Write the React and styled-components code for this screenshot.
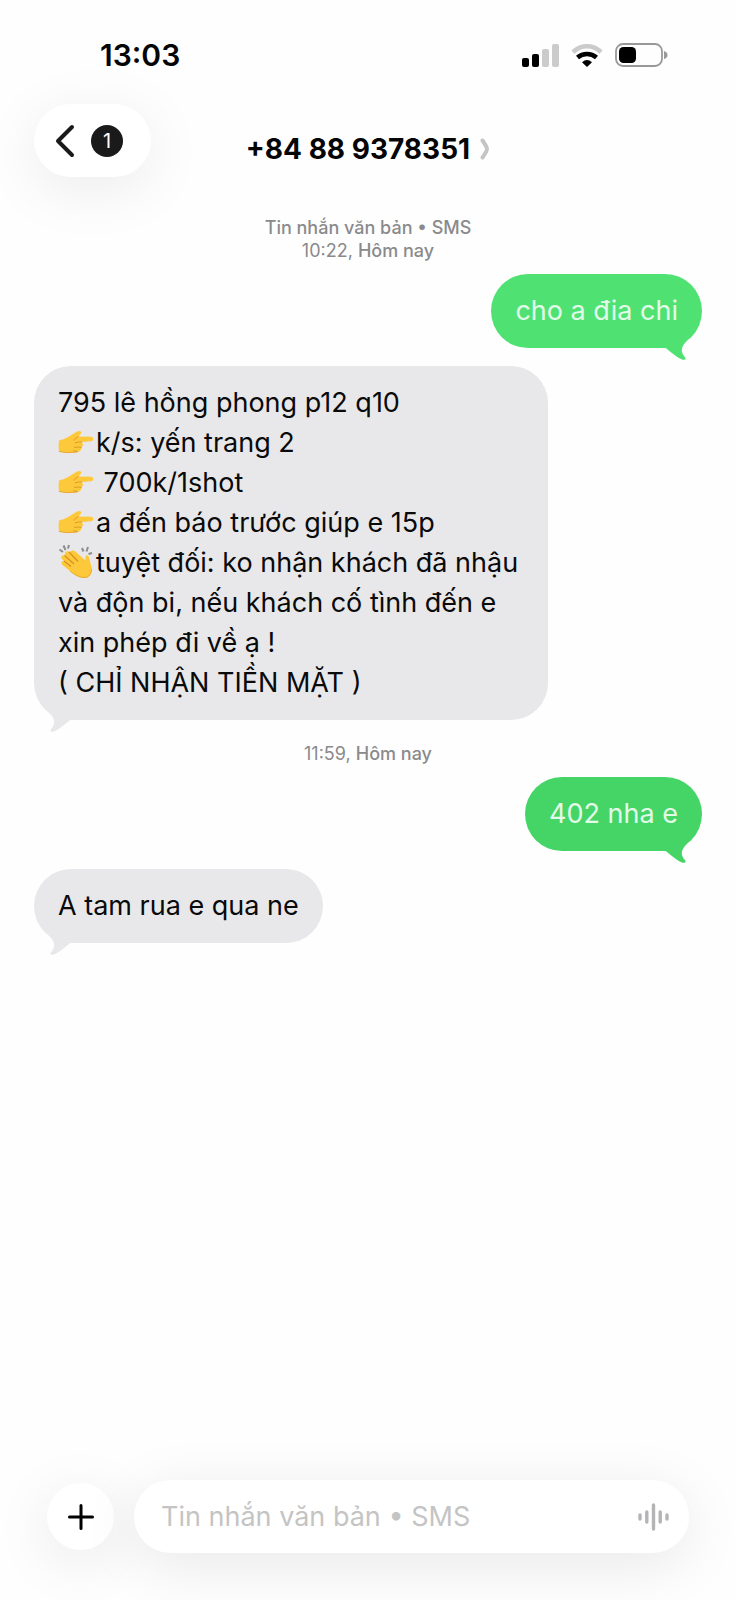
import * as React from "react";
import styled, { createGlobalStyle } from "styled-components";

const GlobalStyle = createGlobalStyle`
  * {
    box-sizing: border-box;
  }
  body {
    margin: 0;
    background: #fefefe;
    color: #050505;
    font-family: Inter, "Noto Sans", sans-serif;
  }
  button,
  input {
    font: inherit;
    border: 0;
  }
`;

const Screen = styled.div`
  display: flex;
  flex-direction: column;
  min-height: 100vh;
`;
const StatusBar = styled.div`
  display: flex;
  align-items: center;
  justify-content: space-between;
  padding: 36px 68px 0 100px;
`;
const Clock = styled.time`
  font-size: 30px;
  font-weight: 600;
  line-height: 38px;
`;
const StatusIcons = styled.div`
  display: flex;
  align-items: center;
  gap: 12px;
`;
const Header = styled.header`
  display: grid;
  grid-template-columns: 1fr auto 1fr;
  padding: 30px 34px 0;
`;
const BackButton = styled.button`
  display: flex;
  align-items: center;
  justify-self: start;
  gap: 16px;
  height: 73px;
  padding: 0 28px 0 21px;
  border-radius: 37px;
  background: #fff;
  color: #1a1a1a;
  box-shadow: 0 12px 60px rgba(0, 0, 0, 0.08);
`;
const Badge = styled.span`
  width: 32px;
  border-radius: 50%;
  background: #1a1a1a;
  color: #fff;
  font-size: 20px;
  line-height: 32px;
  text-align: center;
`;
const Contact = styled.a`
  display: flex;
  align-items: center;
  gap: 10px;
  padding-top: 16px;
  color: #050505;
  text-decoration: none;
`;
const Title = styled.h1`
  margin: 0;
  font-size: 28px;
  font-weight: 700;
  line-height: 36px;
`;
const Thread = styled.main`
  display: flex;
  flex: 1;
  flex-direction: column;
  padding: 35px 34px 0;
`;
const Meta = styled.div`
  padding: 4px 0 12px;
  color: #8a8a8c;
  font-size: 18px;
  line-height: 23px;
  text-align: center;
`;
const Label = styled.span`
  font-weight: 500;
`;
const Bubble = styled.div`
  position: relative;
  align-self: ${props => (props.$sent ? "flex-end" : "flex-start")};
  max-width: 77%;
  margin-bottom: 18px;
  padding: 17px 24px;
  border-radius: 37px;
  background: ${props => props.$tone};
  color: ${props => (props.$sent ? "#e2fbe8" : "#0a0a0a")};
  font-size: 27px;
  line-height: 40px;
`;
const Tail = styled.svg`
  position: absolute;
  bottom: -12px;
  ${props => (props.$sent ? "right: 13px" : "left: 13px; transform: scaleX(-1)")};
`;
const Line = styled.div``;
const Emoji = styled.svg`
  display: inline-block;
  margin-right: 2px;
  vertical-align: ${props => props.$drop};
`;
const Composer = styled.form`
  display: flex;
  align-items: center;
  gap: 20px;
  padding: 0 47px 47px;
`;
const AddButton = styled.button`
  display: grid;
  place-items: center;
  width: 67px;
  height: 67px;
  padding: 0;
  border-radius: 50%;
  background: #fff;
  box-shadow: 0 12px 60px rgba(0, 0, 0, 0.09);
`;
const Field = styled.div`
  display: flex;
  flex: 1;
  align-items: center;
  height: 73px;
  padding: 0 20px 0 27px;
  border-radius: 37px;
  background: #fff;
  box-shadow: 0 12px 60px rgba(0, 0, 0, 0.09);
`;
const TextInput = styled.input`
  flex: 1;
  min-width: 0;
  padding: 0;
  outline: none;
  background: transparent;
  font-size: 27px;
  line-height: 40px;
  &::placeholder {
    color: #c4c4c4;
    opacity: 1;
  }
`;
const VoiceButton = styled.button`
  display: flex;
  padding: 0;
  background: transparent;
`;

const Signal = () => (
  <svg width="37" height="23" viewBox="0 0 37 23" aria-hidden="true">
    <rect x="0" y="14" width="7" height="9" rx="2" />
    <rect x="10" y="10" width="7" height="13" rx="2" />
    <rect x="20" y="5" width="7" height="18" rx="2" fill="#cbcbcb" />
    <rect x="30" y="0" width="7" height="23" rx="2" fill="#cbcbcb" />
  </svg>
);

const Wifi = () => (
  <svg width="32" height="23" viewBox="0 0 32 23" fill="none" aria-hidden="true">
    <path d="M2 8.2C10 .3 22 .3 30 8.2" stroke="#cbcbcb" strokeWidth="4.6" />
    <path d="M6.500 13.500C12 8.800 20 8.800 25.500 13.500" stroke="#000" strokeWidth="4.600" />
    <path d="M16 23 11 18.200Q16 13.800 21 18.200Z" fill="#000" />
  </svg>
);

const Battery = () => (
  <svg width="53" height="24" viewBox="0 0 53 24" aria-hidden="true">
    <rect x="1" y="1" width="46" height="22" rx="7" fill="none" stroke="#999" strokeWidth="1.8" />
    <rect x="4" y="4" width="17" height="16" rx="4.5" />
    <path d="M49 8Q52.500 9 52.500 12T49 16Z" fill="#999" />
  </svg>
);

const Pointing = () => (
  <Emoji $drop="-2px" width="36" height="24" viewBox="0 0 36 24" role="img" aria-label="👉">
    <path
      d="M1 10.500C4 9.500 8 8.500 11 6.500 14 4.500 17 2.500 20 1.200 22.500 .5 24 2 22.800 3.800L20.500 6.500 33 6.800C36 7 36 11 33 11.300L24 12C25.500 14 25 16.500 23.500 17.500 23.500 20 22 21.500 20 21.800 17 23.200 8 23.200 1 21.500 .5 18 .5 14 1 10.500Z"
      fill="#fdc83a"
    />
    <path
      d="M17 13Q20 11.500 24 12M16 17.500Q20 16.500 23.500 17.500M15 21Q18 20.500 20 21.800M20.500 6.500Q17 8 16 10.500"
      fill="none"
      stroke="#e09a28"
    />
    <path d="M1 21.500Q9 23.500 19 22" fill="none" stroke="#eaa92e" />
  </Emoji>
);

const Clapping = () => (
  <Emoji $drop="-6px" width="36" height="34" viewBox="0 0 36 34" role="img" aria-label="👏">
    <path
      d="M1.500 5.500 5 8M5.500 1.500 7.500 6M11 1 10 4.500M24 4 25.500 7.500M30 3 28.500 7.500M34 9 30.500 10"
      stroke="#8c8c8c"
      strokeWidth="2"
    />
    <path
      d="M12 8C13 6 16 6 18 8L27.500 16.500 27.500 13C28 10.500 30.500 11 31 13.500L33.500 23C35 28 32 34 27 34 20 34 16 30 12 27L4.500 21C2.500 19 4 16.500 6 17L3.500 14.500C2.500 12.500 4.500 10.500 6.500 11.500L7 9C8 7 10 7 12 8Z"
      fill="#fdc83a"
    />
    <path d="M6 17 13 22.500M6.500 11.500 16 20M11 8 20 17.500" fill="none" stroke="#d98f24" strokeWidth="1.2" />
    <path d="M12 27C16 30 20 33.500 27 33.500 31 33.500 33.500 29 33.500 25" fill="none" stroke="#eaa92e" />
  </Emoji>
);

const BubbleTail = props => (
  <Tail $sent={props.sent} width="26" height="26" viewBox="0 0 26 26" aria-hidden="true">
    <path
      d="M0 13C5 14 9 21 19 25.500 22 26.500 23.500 25 22 23.200 18 19 17.500 14 22 9L26 4 10 0 0 8Z"
      fill={props.tone}
    />
  </Tail>
);

const GREY = "#e8e8ea";

const Message = props => {
  const tone = props.tone || GREY;
  return (
    <Bubble $sent={props.sent} $tone={tone}>
      <BubbleTail sent={props.sent} tone={tone} />
      {props.children}
    </Bubble>
  );
};

const App = () => (
  <React.Fragment>
    <GlobalStyle />
    <Screen>
      <StatusBar>
        <Clock>13:03</Clock>
        <StatusIcons>
          <Signal />
          <Wifi />
          <Battery />
        </StatusIcons>
      </StatusBar>
      <Header>
        <BackButton type="button">
          <svg width="20" height="34" viewBox="0 0 20 34" fill="none" aria-hidden="true">
            <path
              d="M17 3 3 17 17 31"
              stroke="currentColor"
              strokeWidth="4"
              strokeLinecap="round"
              strokeLinejoin="round"
            />
          </svg>
          <Badge>1</Badge>
        </BackButton>
        <Contact href="#contact">
          <Title>+84 88 9378351</Title>
          <svg width="10" height="22" viewBox="0 0 10 22" fill="none" aria-hidden="true">
            <path d="M2.500 2.500Q7 9 7 11T2.500 19.500" stroke="#c4c4c6" strokeWidth="4" strokeLinecap="round" />
          </svg>
        </Contact>
      </Header>
      <Thread>
        <Meta>
          <div>
            <Label>Tin nhắn văn bản • SMS</Label>
          </div>
          <div>
            10:22, <Label>Hôm nay</Label>
          </div>
        </Meta>
        <Message sent tone="#4fe272">
          cho a đia chi
        </Message>
        <Message>
          <Line>795 lê hồng phong p12 q10</Line>
          <Line>
            <Pointing />
            k/s: yến trang 2
          </Line>
          <Line>
            <Pointing /> 700k/1shot
          </Line>
          <Line>
            <Pointing />a đến báo trước giúp e 15p
          </Line>
          <Line>
            <Clapping />
            tuyệt đối: ko nhận khách đã nhậu và độn bi, nếu khách cố tình đến e xin phép đi về ạ !
          </Line>
          <Line>( CHỈ NHẬN TIỀN MẶT )</Line>
        </Message>
        <Meta>
          11:59, <Label>Hôm nay</Label>
        </Meta>
        <Message sent tone="#45d567">
          402 nha e
        </Message>
        <Message>A tam rua e qua ne</Message>
      </Thread>
      <Composer>
        <AddButton type="button" aria-label="+">
          <svg width="26" height="26" viewBox="0 0 26 26" aria-hidden="true">
            <path d="M13 1.500V24.500M1.500 13H24.500" stroke="#000" strokeWidth="3" strokeLinecap="round" />
          </svg>
        </AddButton>
        <Field>
          <TextInput type="text" placeholder="Tin nhắn văn bản • SMS" aria-label="Tin nhắn văn bản • SMS" />
          <VoiceButton type="button" aria-label="SMS">
            <svg width="31" height="28" viewBox="0 0 31 28" aria-hidden="true">
              <path
                d="M2 12V16M8.800 9V19M15.500 2V26M22.200 9V19M29 12V16"
                stroke="#b4b4b6"
                strokeWidth="3.4"
                strokeLinecap="round"
              />
            </svg>
          </VoiceButton>
        </Field>
      </Composer>
    </Screen>
  </React.Fragment>
);

export default App;
